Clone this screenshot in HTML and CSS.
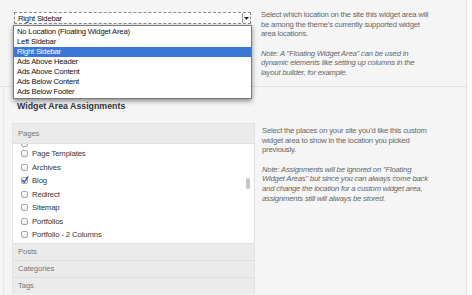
FILE: index.html
```html
<!DOCTYPE html>
<html lang="en">
<head>
    <meta charset="UTF-8">
    <title>Widget Area</title>
    <link rel="stylesheet" href="styles.css">
</head>
<body>
    <div class="panel">
        <div class="row row-top">
            <div class="col-left">
                <div class="select-wrap">
                    <div class="select">
                        <span class="select-value">Right Sidebar</span>
                        <span class="select-arrow">
                            <svg width="5" height="3" viewBox="0 0 5 3"><path d="M0 0h5L2.5 3z" fill="#222"/></svg>
                        </span>
                    </div>
                    <ul class="dropdown">
                        <li>No Location (Floating Widget Area)</li>
                        <li>Left Sidebar</li>
                        <li class="selected">Right Sidebar</li>
                        <li>Ads Above Header</li>
                        <li>Ads Above Content</li>
                        <li>Ads Below Content</li>
                        <li>Ads Below Footer</li>
                    </ul>
                </div>
            </div>
            <div class="col-right">
                <p>Select which location on the site this widget area will be among the theme's currently supported widget area locations.</p>
                <p class="note">Note: A "Floating Widget Area" can be used in dynamic elements like setting up columns in the layout builder, for example.</p>
            </div>
        </div>

        <div class="row row-bottom">
            <div class="col-left">
                <h3 class="section-title">Widget Area Assignments</h3>
                <div class="accordion">
                    <div class="acc-head">Pages</div>
                    <div class="acc-body">
                        <ul class="checklist">
                            <li class="clipped"><span class="check"></span></li>
                            <li><span class="check"></span>Page Templates</li>
                            <li><span class="check"></span>Archives</li>
                            <li><span class="check checked"><svg width="8" height="8" viewBox="0 0 8 8"><path d="M1.5 4.2l1.8 2L6.8 1" fill="none" stroke="#2a5db8" stroke-width="1.4" stroke-linecap="round" stroke-linejoin="round"/></svg></span>Blog</li>
                            <li><span class="check"></span>Redirect</li>
                            <li><span class="check"></span>Sitemap</li>
                            <li><span class="check"></span>Portfolios</li>
                            <li><span class="check"></span>Portfolio - 2 Columns</li>
                        </ul>
                        <span class="scroll-thumb"></span>
                    </div>
                    <div class="acc-head closed">Posts</div>
                    <div class="acc-head closed">Categories</div>
                    <div class="acc-head closed">Tags</div>
                </div>
            </div>
            <div class="col-right">
                <p>Select the places on your site you'd like this custom widget area to show in the location you picked previously.</p>
                <p class="note">Note: Assignments will be ignored on "Floating Widget Areas" but since you can always come back and change the location for a custom widget area, assignments still will always be stored.</p>
            </div>
        </div>
    </div>
</body>
</html>
```

FILE: styles.css
```css
* {
    margin: 0;
    padding: 0;
    box-sizing: border-box;
}

body {
    background-color: #fbfbfb;
    font-family: 'Liberation Sans', Arial, sans-serif;
    color: #333;
}

ul {
    list-style: none;
}

.panel {
    width: 467px;
    border-right: 1px solid #e2e2e2;
    background-color: #f5f5f5;
    min-height: 295px;
}

.row {
    display: flex;
}

.row-top {
    height: 87px;
    border-bottom: 1px solid #e0e0e0;
}

.row-bottom {
    margin-left: 3px;
    border-left: 1px solid #e6e6e6;
}

.col-left {
    width: 258px;
    flex-shrink: 0;
}

.row-top .col-left {
    padding: 12px 0 0 14px;
}

.row-bottom .col-left {
    width: 255px;
    padding: 14px 0 0 8px;
}

.col-right {
    padding-left: 3px;
    width: 176px;
    font-size: 7.7px;
    line-height: 9.7px;
    letter-spacing: -0.2px;
    color: #666;
}

.row-top .col-right {
    padding-top: 10px;
}

.row-bottom .col-right {
    padding-top: 39px;
}

.col-right p {
    margin-bottom: 9.4px;
}

.col-right .note {
    font-style: italic;
}

/* select */
.select-wrap {
    position: relative;
    width: 237px;
}

.select {
    display: flex;
    align-items: center;
    height: 12px;
    background-color: #fff;
    border: 1px dashed #8a8a8a;
    font-size: 7.7px;
    letter-spacing: -0.2px;
    color: #111;
}

.select-value {
    flex: 1;
    padding-left: 3px;
}

.select-arrow {
    width: 8px;
    height: 100%;
    display: flex;
    align-items: center;
    justify-content: center;
    border-left: 1px solid #9a9a9a;
}

.dropdown {
    position: absolute;
    top: 13px;
    left: -1px;
    width: 239px;
    background-color: #fff;
    border: 1px solid #7a7a7a;
    box-shadow: 0 2px 5px rgba(0, 0, 0, 0.45);
    padding: 1px 0;
    z-index: 5;
}

.dropdown li {
    height: 10px;
    line-height: 10px;
    padding-left: 3px;
    font-size: 7.7px;
    letter-spacing: -0.2px;
    color: #111;
}

.dropdown li.selected {
    background-color: #3a78d8;
    color: #fff;
}

/* assignments */
.section-title {
    font-size: 8.8px;
    font-weight: bold;
    color: #333;
    padding-left: 5px;
    height: 22px;
    line-height: 10px;
}

.accordion {
    width: 243px;
    border: 1px solid #e2e2e2;
    border-bottom: none;
}

.acc-head {
    height: 19px;
    line-height: 19px;
    padding-left: 5px;
    background-color: #ebebeb;
    font-size: 7.7px;
    letter-spacing: -0.1px;
    color: #777;
}

.acc-head.closed {
    height: 17px;
    line-height: 16px;
    border-top: 1px solid #dedede;
}

.acc-body {
    position: relative;
    height: 100px;
    overflow: hidden;
    background-color: #fff;
    border-top: 1px solid #e0e0e0;
}

.checklist {
    margin-top: -4px;
}

.checklist li {
    display: flex;
    align-items: center;
    height: 13.5px;
    padding-left: 8px;
    font-size: 7.7px;
    letter-spacing: -0.1px;
    color: #333;
}

.checklist li.clipped {
    height: 7px;
    align-items: flex-end;
}

.check {
    width: 7px;
    height: 7px;
    margin-right: 4px;
    border: 1px solid #a8a8a8;
    border-radius: 2px;
    background: linear-gradient(#fff, #ececec);
    display: flex;
    align-items: center;
    justify-content: center;
}

.check svg {
    flex-shrink: 0;
    margin-top: -1px;
}

.scroll-thumb {
    position: absolute;
    right: 4px;
    top: 34px;
    width: 4px;
    height: 11px;
    border-radius: 2px;
    background-color: #c6c6c6;
}
```
